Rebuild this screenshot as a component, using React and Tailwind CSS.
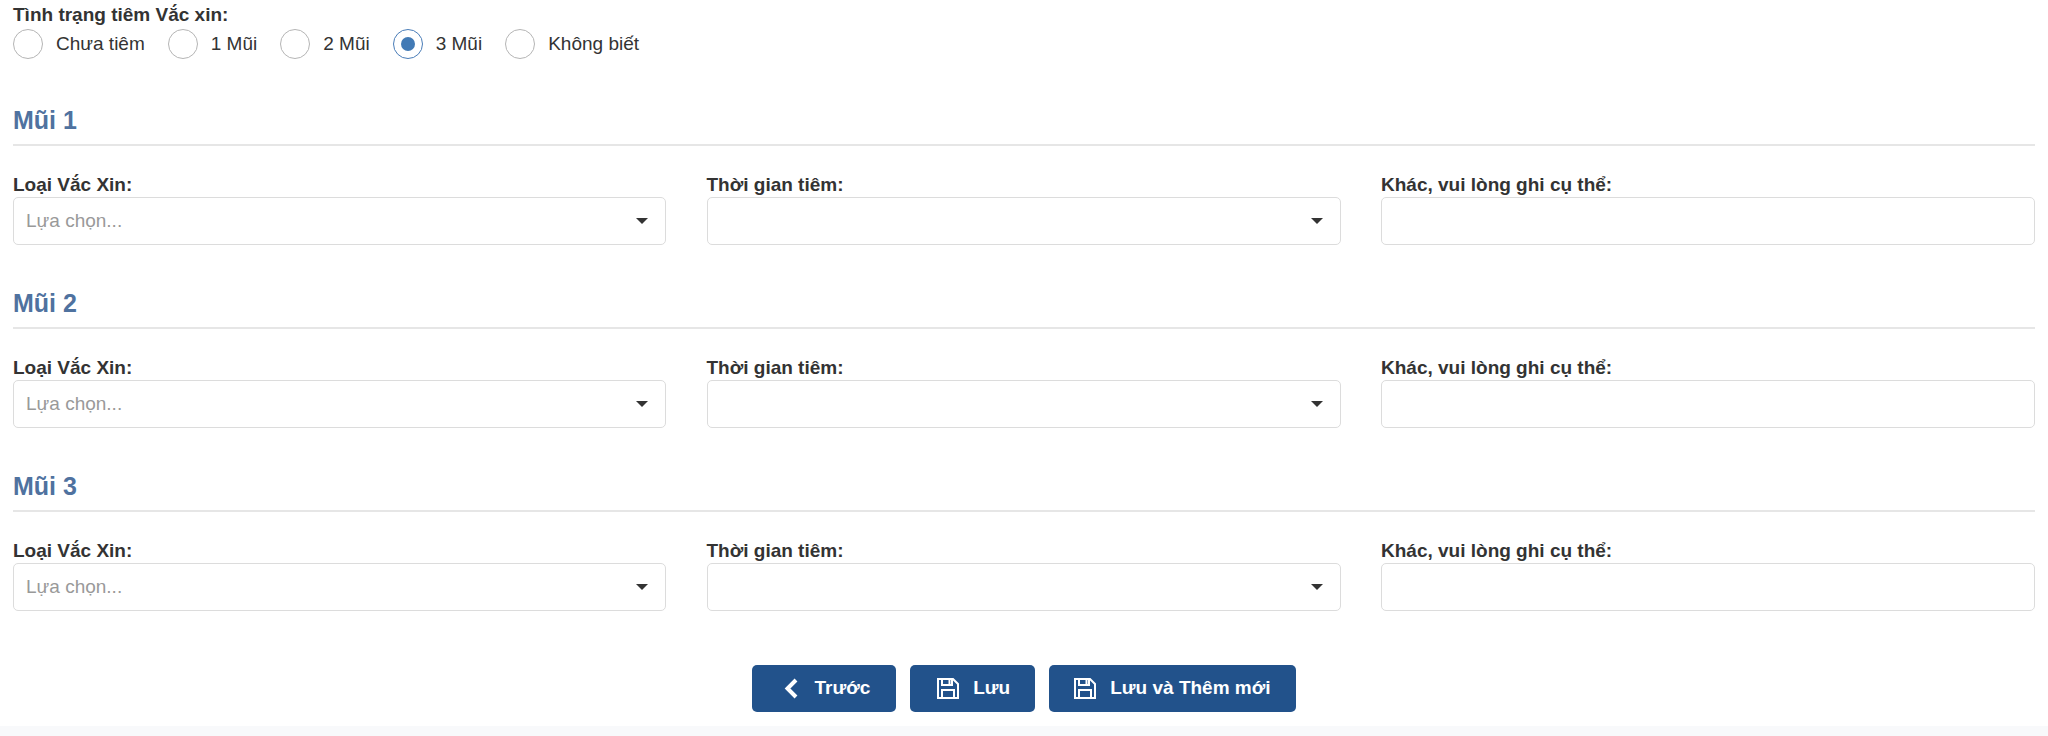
const font = { fontFamily: '"Liberation Sans", Arial, sans-serif' };
const radios = ['Chưa tiêm', '1 Mũi', '2 Mũi', '3 Mũi', 'Không biết'];
const doses = ['Mũi 1', 'Mũi 2', 'Mũi 3'];

function Radio({ label, checked }) {
  return (
    <label className="flex items-center">
      <span className={`flex h-[30px] w-[30px] items-center justify-center rounded-full border bg-white ${checked ? 'border-[#4a7db8]' : 'border-[#b5b5b5]'}`}>
        {checked && <span className="h-[14px] w-[14px] rounded-full bg-[#427ab5]" />}
      </span>
      <span className="ml-[13px] text-[19px] leading-[30px] text-[#333]">{label}</span>
    </label>
  );
}

function Caret() {
  return <span className="h-0 w-0 border-x-[6px] border-t-[6px] border-x-transparent border-t-[#333]" />;
}

function Dose({ title }) {
  return (
    <section className="h-[183px]">
      <h3 className="h-[41px] border-b-2 border-[#e6e6e6] text-[25px] font-bold leading-[30px] text-[#4f729f]">{title}</h3>
      <div className="mt-[27px] grid grid-cols-[653px_634px_654px] gap-x-[40.5px]">
        <div>
          <div className="text-[19px] font-bold leading-[24px] text-[#333]">Loại Vắc Xin:</div>
          <div className="flex h-[48px] items-center justify-between rounded-[5px] border border-[#dcdcdc] pl-[12px] pr-[17px]">
            <span className="text-[19px] text-[#999]">Lựa chọn...</span>
            <Caret />
          </div>
        </div>
        <div>
          <div className="text-[19px] font-bold leading-[24px] text-[#333]">Thời gian tiêm:</div>
          <div className="flex h-[48px] items-center justify-end rounded-[5px] border border-[#dcdcdc] pr-[17px]">
            <Caret />
          </div>
        </div>
        <div>
          <div className="text-[19px] font-bold leading-[24px] text-[#333]">Khác, vui lòng ghi cụ thể:</div>
          <div className="h-[48px] rounded-[5px] border border-[#dcdcdc]" />
        </div>
      </div>
    </section>
  );
}

function ChevronIcon() {
  return (
    <svg viewBox="0 0 14 21" className="ml-[5px] mr-[16px] h-[21px] w-[14px]" fill="none" stroke="currentColor" strokeWidth="4">
      <path d="M12 2 L3.5 10.5 L12 19" />
    </svg>
  );
}

function SaveIcon() {
  return (
    <svg viewBox="0 0 22 21" className="mr-[14px] h-[21px] w-[22px]" fill="none" stroke="currentColor" strokeWidth="2">
      <path d="M1 1 H16 L21 6 V20 H1 Z" />
      <path d="M5 1 V7 H15 V1" />
      <path d="M5 20 V12 H17 V20" />
      <path d="M11.5 2 V6 H13.5 V2 Z" fill="currentColor" stroke="none" />
    </svg>
  );
}

function Btn({ icon, pad, children }) {
  return (
    <button className={`flex h-[47px] items-center rounded-[5px] bg-[#22528b] text-[19px] font-bold text-white ${pad}`}>
      {icon}
      {children}
    </button>
  );
}

export default function App() {
  return (
    <div style={font} className="flex h-[736px] flex-col bg-[#f8f9fb]">
      <div className="h-[726px] bg-white px-[13px]">
        <div className="text-[19px] font-bold leading-[29px] text-[#333]">Tình trạng tiêm Vắc xin:</div>
        <div className="flex gap-[23px]">
          {radios.map((r, i) => <Radio key={r} label={r} checked={i === 3} />)}
        </div>
        <div className="mt-[46px]">
          {doses.map((d) => <Dose key={d} title={d} />)}
        </div>
        <div className="mt-[11px] flex justify-center gap-[14px]">
          <Btn pad="pl-[27px] pr-[26px]" icon={<ChevronIcon />}>Trước</Btn>
          <Btn pad="pl-[27px] pr-[25px]" icon={<SaveIcon />}>Lưu</Btn>
          <Btn pad="pl-[25px] pr-[25px]" icon={<SaveIcon />}>Lưu và Thêm mới</Btn>
        </div>
      </div>
    </div>
  );
}
